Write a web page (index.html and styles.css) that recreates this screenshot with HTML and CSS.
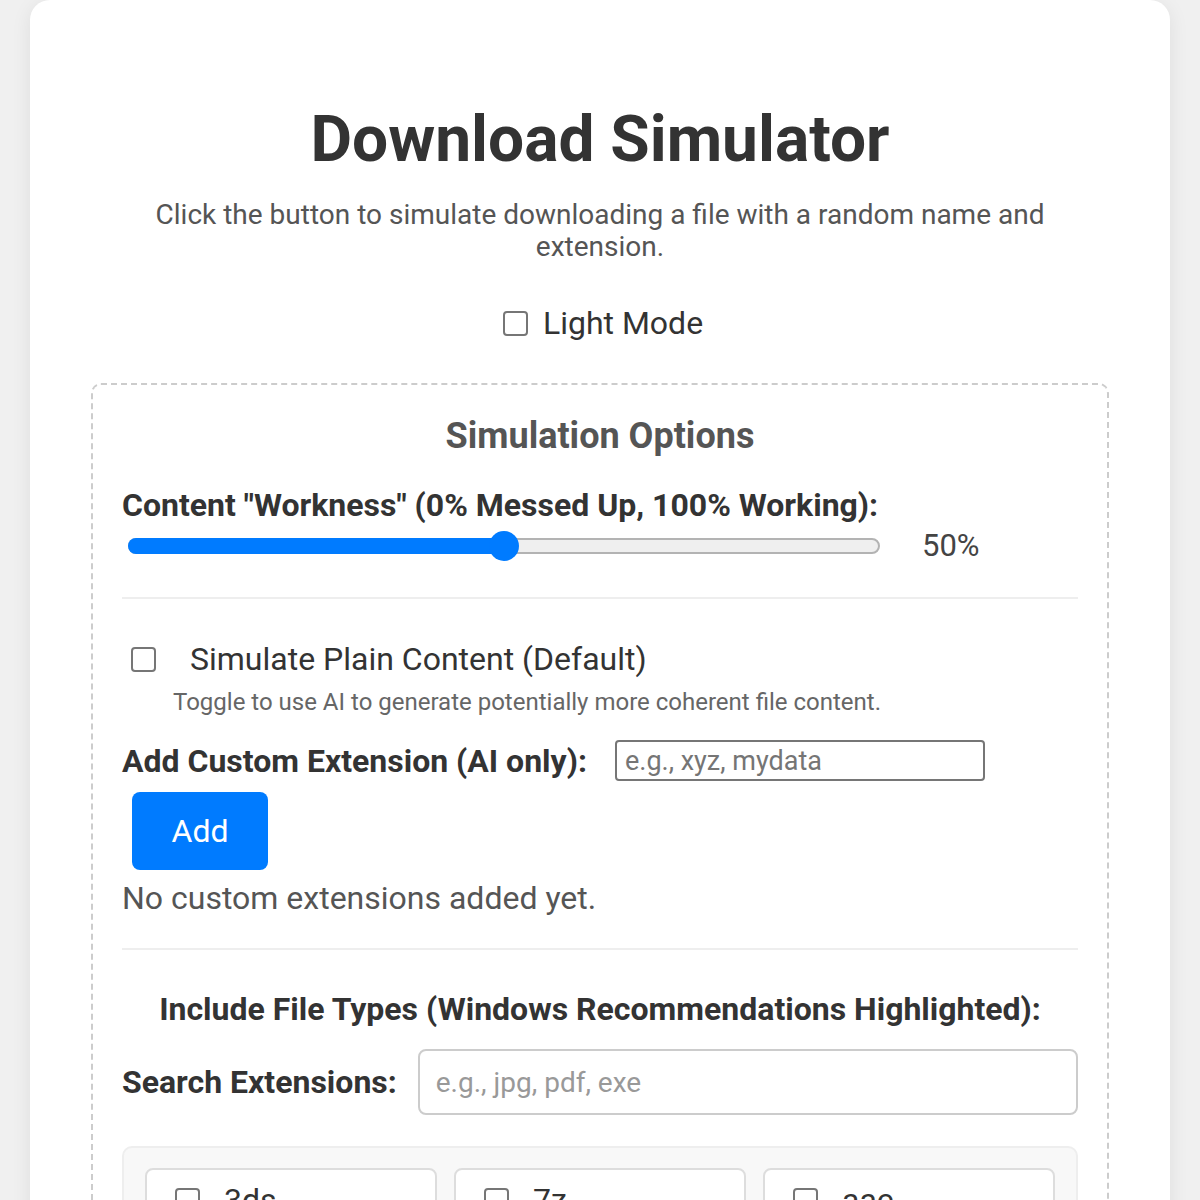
FILE: index.html
```html
<!DOCTYPE html>
<html lang="en">
<head>
<meta charset="utf-8">
<title>Download Simulator</title>
<link rel="stylesheet" href="styles.css">
</head>
<body>
<main class="card">
  <h1 class="title">Download Simulator</h1>
  <p class="subtitle">Click the button to simulate downloading a file with a random name and extension.</p>
  <label class="mode">
    <input type="checkbox" class="check">
    <span>Light Mode</span>
  </label>

  <section class="options">
    <h2 class="options-title">Simulation Options</h2>
    <div class="field-label">Content "Workness" (0% Messed Up, 100% Working):</div>
    <div class="slider-row">
      <div class="range-track">
        <div class="range-fill" style="width: 50%"></div>
        <div class="range-thumb" style="left: 50%"></div>
      </div>
      <span class="range-value">50%</span>
    </div>

    <div class="divider divider-1"></div>

    <label class="toggle-row">
      <input type="checkbox" class="check">
      <span>Simulate Plain Content (Default)</span>
    </label>
    <p class="hint">Toggle to use AI to generate potentially more coherent file content.</p>

    <div class="custom-row">
      <span class="field-label inline">Add Custom Extension (AI only):</span>
      <input type="text" class="custom-input" placeholder="e.g., xyz, mydata">
      <button class="add-btn" type="button">Add</button>
    </div>
    <p class="empty-note">No custom extensions added yet.</p>

    <div class="divider divider-2"></div>

    <h3 class="types-title">Include File Types (Windows Recommendations Highlighted):</h3>
    <div class="search-row">
      <span class="field-label inline">Search Extensions:</span>
      <input type="text" class="search-input" placeholder="e.g., jpg, pdf, exe">
    </div>

    <div class="type-grid">
      <label class="type-item"><input type="checkbox" class="check"><span>3ds</span></label>
      <label class="type-item"><input type="checkbox" class="check"><span>7z</span></label>
      <label class="type-item"><input type="checkbox" class="check"><span>aac</span></label>
      <label class="type-item"><input type="checkbox" class="check"><span>accdb</span></label>
      <label class="type-item"><input type="checkbox" class="check"><span>ai</span></label>
      <label class="type-item"><input type="checkbox" class="check"><span>aif</span></label>
    </div>
  </section>
</main>
</body>
</html>
```

FILE: styles.css
```css
html, body {
  margin: 0;
  padding: 0;
}

body {
  background: #f0f0f0;
  font-family: Roboto, "Liberation Sans", Arial, sans-serif;
  color: #333;
}

.card {
  margin: 0 30px;
  background: #ffffff;
  border-radius: 20px;
  box-shadow: 0 4px 20px rgba(0, 0, 0, 0.08);
  padding: 101px 61px 60px;
}

.title {
  margin: 0;
  font-size: 64px;
  line-height: 78px;
  font-weight: 700;
  color: #333;
  text-align: center;
}

.subtitle {
  margin: 20px auto 0;
  max-width: 950px;
  font-size: 28px;
  line-height: 32px;
  color: #555;
  text-align: center;
}

.check {
  -webkit-appearance: none;
  appearance: none;
  box-sizing: border-box;
  width: 25px;
  height: 25px;
  margin: 0;
  flex: none;
  border: 2px solid #767676;
  border-radius: 4px;
  background: #fff;
}

.mode {
  display: flex;
  justify-content: center;
  align-items: center;
  gap: 15px;
  margin-top: 42px;
  padding-left: 6px;
  font-size: 32px;
  line-height: 36px;
  color: #333;
}

.options {
  margin-top: 42px;
  border: 2px dashed #cccccc;
  border-radius: 10px;
  padding: 30px 29px 40px;
}

.options-title {
  margin: 0;
  font-size: 36px;
  line-height: 42px;
  font-weight: 700;
  color: #555;
  text-align: center;
}

.field-label {
  margin-top: 30px;
  font-size: 32px;
  line-height: 36px;
  font-weight: 700;
  color: #333;
}

.field-label.inline {
  margin-top: 0;
}

.slider-row {
  display: flex;
  align-items: center;
  height: 30px;
  margin-top: 8px;
}

.range-track {
  position: relative;
  box-sizing: border-box;
  width: 752px;
  height: 16px;
  margin-left: 6px;
  border: 2px solid #b3b3b3;
  border-radius: 8px;
  background: #efefef;
}

.range-fill {
  position: absolute;
  left: -2px;
  top: -2px;
  bottom: -2px;
  background: #007bff;
  border-radius: 8px;
}

.range-thumb {
  position: absolute;
  top: 50%;
  width: 30px;
  height: 30px;
  border-radius: 50%;
  background: #007bff;
  transform: translate(-50%, -50%);
}

.range-value {
  margin-left: 42px;
  font-size: 31px;
  line-height: 36px;
  color: #444;
}

.divider {
  height: 2px;
  background: #eeeeee;
}

.divider-1 {
  margin-top: 36px;
}

.toggle-row {
  display: flex;
  align-items: center;
  gap: 34px;
  margin-top: 42px;
  padding-left: 9px;
  font-size: 32px;
  line-height: 36px;
  color: #333;
}

.hint {
  margin: 11px 0 0;
  padding-left: 51px;
  font-size: 24px;
  line-height: 28px;
  color: #666;
}

.custom-row {
  display: flex;
  flex-wrap: wrap;
  align-items: center;
  margin-top: 24px;
}

.custom-input {
  box-sizing: border-box;
  width: 370px;
  height: 41px;
  margin-left: 28px;
  padding: 0 8px;
  border: 2px solid #767676;
  border-radius: 4px;
  font-family: Roboto, "Liberation Sans", Arial, sans-serif;
  font-size: 27px;
  color: #333;
  background: #fff;
}

.custom-input::placeholder {
  color: #757575;
}

.add-btn {
  box-sizing: border-box;
  width: 136px;
  height: 78px;
  margin: 11px 0 0 10px;
  border: none;
  border-radius: 8px;
  background: #007bff;
  color: #fff;
  font-family: Roboto, "Liberation Sans", Arial, sans-serif;
  font-size: 32px;
  padding: 0;
}

.empty-note {
  margin: 10px 0 0;
  font-size: 32px;
  line-height: 37px;
  color: #555;
}

.divider-2 {
  margin-top: 31px;
}

.types-title {
  margin: 41px 0 0;
  font-size: 32px;
  line-height: 36px;
  font-weight: 700;
  color: #333;
  text-align: center;
}

.search-row {
  display: flex;
  align-items: center;
  gap: 21px;
  margin-top: 22px;
}

.search-input {
  flex: 1;
  box-sizing: border-box;
  height: 66px;
  padding: 0 16px;
  border: 2px solid #cccccc;
  border-radius: 8px;
  font-family: Roboto, "Liberation Sans", Arial, sans-serif;
  font-size: 28px;
  color: #333;
  background: #fff;
}

.search-input::placeholder {
  color: #999;
}

.type-grid {
  display: grid;
  grid-template-columns: repeat(3, 1fr);
  gap: 17px;
  margin-top: 31px;
  padding: 20px 21px;
  border: 2px solid #eeeeee;
  border-radius: 10px;
  background: #f8f8f8;
}

.type-item {
  display: flex;
  align-items: center;
  gap: 24px;
  padding: 12px 28px;
  border: 2px solid #dddddd;
  border-radius: 8px;
  background: #fff;
  font-size: 32px;
  line-height: 37px;
  color: #333;
}
```
